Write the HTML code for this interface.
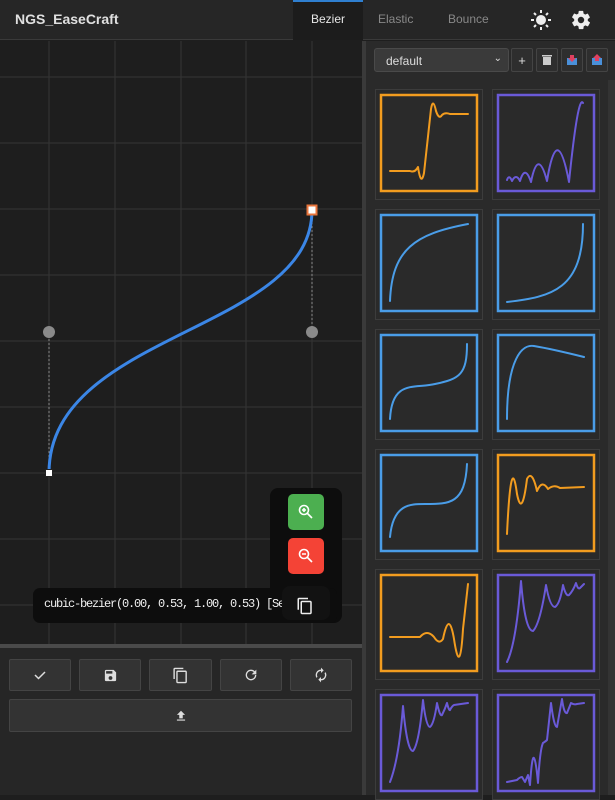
<!DOCTYPE html>
<html><head><meta charset="utf-8"><style>
*{box-sizing:border-box;margin:0;padding:0}
body{width:615px;height:795px;overflow:hidden;background:#1e1e1e;font-family:"Liberation Sans",sans-serif;position:relative}
.abs{position:absolute}
.hdr{left:0;top:0;width:615px;height:40px;background:#262626;border-bottom:1px solid #3a3a3a}
.title{left:15px;top:11px;color:#e0e0e0;font-size:14px;font-weight:bold}
.tab{top:12px;font-size:12px;color:#888}
.btn{background:#333;border:1px solid #444;border-radius:2px;display:flex;align-items:center;justify-content:center}
.card{width:108px;height:111px;background:#2a2a2a;border:1px solid #3c3c3c}
.card svg{display:block}
.card polyline,.card path{stroke-linejoin:round;stroke-linecap:round}
</style></head><body>
<div class="abs hdr"></div>
<div class="abs title">NGS_EaseCraft</div>
<div class="abs" style="left:293px;top:0;width:70px;height:40px;background:#1c1c1c;border-top:2px solid #2f7fd0"></div>
<div class="abs tab" style="left:311px;color:#e8e8e8">Bezier</div>
<div class="abs tab" style="left:378px">Elastic</div>
<div class="abs tab" style="left:448px">Bounce</div>
<svg class="abs" style="left:530px;top:9px" width="22" height="22" viewBox="0 0 22 22"><circle cx="11" cy="11" r="5" fill="#eee"/><g stroke="#eee" stroke-width="2"><path d="M11 1v3M11 18v3M1 11h3M18 11h3M4 4l2 2M16 16l2 2M4 18l2-2M16 6l2-2"/></g></svg>
<svg class="abs" style="left:570px;top:9px" width="22" height="22" viewBox="0 0 24 24"><path fill="#eee" d="M19.4 13c.04-.3.06-.6.06-1s-.02-.7-.06-1l2.1-1.6c.2-.15.25-.4.12-.6l-2-3.5c-.12-.2-.38-.3-.6-.2l-2.5 1c-.5-.4-1.1-.7-1.700-1l-.4-2.6C14.4 2.200 14.2 2 14 2h-4c-.25 0-.45.2-.5.4l-.4 2.6c-.6.25-1.2.6-1.7 1l-2.5-1c-.2-.1-.5 0-.6.2l-2 3.5c-.13.2-.07.45.12.6L4.6 11c-.04.3-.07.6-.07 1s.03.7.07 1l-2.1 1.6c-.2.15-.25.4-.12.6l2 3.5c.12.2.38.3.6.2l2.5-1c.5.4 1.1.7 1.7 1l.4 2.6c.05.25.25.4.5.4h4c.25 0 .45-.2.5-.4l.4-2.6c.6-.25 1.2-.6 1.7-1l2.5 1c.2.1.5 0 .6-.2l2-3.5c.13-.2.07-.45-.12-.6L19.4 13zM12 15.5a3.5 3.5 0 110-7 3.5 3.5 0 010 7z"/></svg>

<svg class="abs" style="left:0;top:41px" width="362" height="603" viewBox="0 41 362 603">
<rect x="0" y="41" width="362" height="603" fill="#1e1e1e"/>
<g stroke="#333" stroke-width="1.2">
<path d="M49 41V644M115 41V644M181 41V644M246 41V644M312 41V644"/>
<path d="M0 77H362M0 143H362M0 209H362M0 275H362M0 341H362M0 407H362M0 473H362M0 539H362M0 605H362"/>
</g>
<g stroke="#888" stroke-width="1" stroke-dasharray="2 2"><path d="M49 473V332M312 210V332"/></g>
<path d="M49 473C49 332 312 332 312 210" fill="none" stroke="#3b86e6" stroke-width="3"/>
<circle cx="49" cy="332" r="6" fill="#8a8a8a"/><circle cx="312" cy="332" r="6" fill="#8a8a8a"/>
<rect x="45.5" y="469.5" width="7" height="7" fill="#fff" stroke="#222"/>
<rect x="307.5" y="205.5" width="9" height="9" fill="#fff" stroke="#e8743b" stroke-width="2"/>
</svg>
<div class="abs" style="left:270px;top:488px;width:72px;height:135px;background:#0d0d0d;border-radius:8px"></div>
<div class="abs" style="left:288px;top:494px;width:36px;height:36px;background:#4caf50;border-radius:5px"></div>
<svg class="abs" style="left:297px;top:503px" width="18" height="18" viewBox="0 0 18 18"><circle cx="7" cy="7" r="4.5" fill="none" stroke="#fff" stroke-width="1.6"/><path d="M10.5 10.5l4.5 4.5M5 7h4M7 5v4" stroke="#fff" stroke-width="1.6"/></svg>
<div class="abs" style="left:288px;top:538px;width:36px;height:36px;background:#f44336;border-radius:5px"></div>
<svg class="abs" style="left:297px;top:547px" width="18" height="18" viewBox="0 0 18 18"><circle cx="7" cy="7" r="4.5" fill="none" stroke="#fff" stroke-width="1.6"/><path d="M10.5 10.5l4.5 4.5M5 7h4" stroke="#fff" stroke-width="1.6"/></svg>
<div class="abs" style="left:33px;top:588px;width:304px;height:35px;background:#0d0d0d;border-radius:7px"></div>
<div class="abs" style="left:44px;top:597px;width:241px;overflow:hidden;color:#f0f0f0;font:12px 'Liberation Mono',monospace;letter-spacing:-1.2px;white-space:nowrap">cubic-bezier(0.00, 0.53, 1.00, 0.53) [Se</div>
<div class="abs" style="left:282px;top:586px;width:48px;height:34px;background:#121212;border-radius:8px"></div>
<svg class="abs" style="left:296px;top:597px" width="18" height="18" viewBox="0 0 24 24"><path fill="#eee" d="M16 1H4c-1.1 0-2 .9-2 2v14h2V3h12V1zm3 4H8c-1.1 0-2 .9-2 2v14c0 1.1.9 2 2 2h11c1.1 0 2-.9 2-2V7c0-1.1-.9-2-2-2zm0 16H8V7h11v14z"/></svg>

<div class="abs" style="left:0;top:644px;width:362px;height:4px;background:#4a4a4a"></div>
<div class="abs" style="left:0;top:648px;width:362px;height:147px;background:#262626"></div>
<div class="abs btn" style="left:9px;top:659px;width:62px;height:32px"><svg width="14" height="14" viewBox="0 0 14 14"><path d="M2 7l3.5 3.5L12 4" fill="none" stroke="#ddd" stroke-width="1.5"/></svg></div>
<div class="abs btn" style="left:79px;top:659px;width:62px;height:32px"><svg width="15" height="15" viewBox="0 0 24 24"><path fill="#ddd" d="M17 3H5a2 2 0 00-2 2v14a2 2 0 002 2h14a2 2 0 002-2V7l-4-4zm-5 16a3 3 0 110-6 3 3 0 010 6zm3-10H5V5h10v4z"/></svg></div>
<div class="abs btn" style="left:149px;top:659px;width:63px;height:32px"><svg width="17" height="17" viewBox="0 0 24 24"><path fill="#ddd" d="M16 1H4c-1.1 0-2 .9-2 2v14h2V3h12V1zm3 4H8c-1.1 0-2 .9-2 2v14c0 1.1.9 2 2 2h11c1.1 0 2-.9 2-2V7c0-1.1-.9-2-2-2zm0 16H8V7h11v14z"/></svg></div>
<div class="abs btn" style="left:220px;top:659px;width:62px;height:32px"><svg width="16" height="16" viewBox="0 0 24 24"><path fill="#ddd" d="M17.65 6.35A7.960 7.960 0 0012 4a8 8 0 108 8h-2a6 6 0 11-1.76-4.24L13 11h7V4l-2.350 2.35z"/></svg></div>
<div class="abs btn" style="left:290px;top:659px;width:62px;height:32px"><svg width="16" height="16" viewBox="0 0 24 24"><path fill="#ddd" d="M12 6v3l4-4-4-4v3a8 8 0 00-6.76 12.26l1.46-1.46A6 6 0 0112 6zm6.76 1.74L17.3 9.2A6 6 0 0112 18v-3l-4 4 4 4v-3a8 8 0 006.76-12.26z"/></svg></div>
<div class="abs btn" style="left:9px;top:699px;width:343px;height:33px"><svg width="14" height="14" viewBox="0 0 24 24"><path fill="#ddd" d="M5 20h14v-2H5v2zm0-10h4v6h6v-6h4l-7-7-7 7z"/></svg></div>

<div class="abs" style="left:362px;top:41px;width:4px;height:754px;background:#3a3a3a"></div>
<div class="abs" style="left:366px;top:41px;width:249px;height:754px;background:#2a2a2a"></div>
<div class="abs" style="left:608px;top:80px;width:7px;height:715px;background:#333"></div>
<div class="abs" style="left:374px;top:48px;width:135px;height:24px;background:#3a3a3a;border:1px solid #4a4a4a;border-radius:3px;color:#ddd;font-size:12px;padding:5px 0 0 11px">default<span style="position:absolute;right:6px;top:4px;font-size:10px">&#8964;</span></div>
<div class="abs btn" style="left:511px;top:48px;width:22px;height:24px;color:#ddd;font-size:13px;background:#2e2e2e">+</div>
<div class="abs btn" style="left:536px;top:48px;width:22px;height:24px;background:#2e2e2e"><svg width="10" height="12" viewBox="0 0 10 12"><path fill="#ccc" d="M1 3h8v8H1zM0 1h10v1.5H0z"/></svg></div>
<div class="abs btn" style="left:561px;top:48px;width:22px;height:24px;background:#2e2e2e"><svg width="12" height="12" viewBox="0 0 12 12"><rect x="1" y="4" width="10" height="7" fill="#4a90d9"/><path d="M4 1h4v3h2L6 8 2 4h2z" fill="#e04060"/></svg></div>
<div class="abs btn" style="left:586px;top:48px;width:22px;height:24px;background:#2e2e2e"><svg width="12" height="12" viewBox="0 0 12 12"><rect x="1" y="4" width="10" height="7" fill="#4a90d9"/><path d="M6 0l4 4H8v3H4V4H2z" fill="#e04060"/></svg></div>

<div class="abs" style="left:375px;top:89px"><div class="card"><svg width="106" height="109" viewBox="1 1 106 109"><rect x="6" y="6" width="96" height="96" fill="none" stroke="#f29c1f" stroke-width="2.5"/><path fill="none" stroke="#f29c1f" stroke-width="2" d="M15,82 L35,82 Q40,84 43,78 Q46,98 49,84 L56,20 Q58,8 61,22 Q64,31 67,26 Q70,23 75,25 L93,25"/></svg></div></div>
<div class="abs" style="left:492px;top:89px"><div class="card"><svg width="106" height="109" viewBox="1 1 106 109"><rect x="6" y="6" width="96" height="96" fill="none" stroke="#6a5ad8" stroke-width="2.5"/><path fill="none" stroke="#6a5ad8" stroke-width="2" d="M15,91 Q17,85 20,92 Q24,84 28,92 Q33,75 39,93 Q46,58 55,92 Q65,30 77,93 Q86,5 91,14"/></svg></div></div>
<div class="abs" style="left:375px;top:209px"><div class="card"><svg width="106" height="109" viewBox="1 1 106 109"><rect x="6" y="6" width="96" height="96" fill="none" stroke="#4a9de8" stroke-width="2.5"/><path fill="none" stroke="#4a9de8" stroke-width="2" d="M15,92 C17,40 40,25 93,15"/></svg></div></div>
<div class="abs" style="left:492px;top:209px"><div class="card"><svg width="106" height="109" viewBox="1 1 106 109"><rect x="6" y="6" width="96" height="96" fill="none" stroke="#4a9de8" stroke-width="2.5"/><path fill="none" stroke="#4a9de8" stroke-width="2" d="M15,93 C60,88 91,80 91,15"/></svg></div></div>
<div class="abs" style="left:375px;top:329px"><div class="card"><svg width="106" height="109" viewBox="1 1 106 109"><rect x="6" y="6" width="96" height="96" fill="none" stroke="#4a9de8" stroke-width="2.5"/><path fill="none" stroke="#4a9de8" stroke-width="2" d="M15,90 C17,50 40,60 60,55 C85,50 92,45 92,15"/></svg></div></div>
<div class="abs" style="left:492px;top:329px"><div class="card"><svg width="106" height="109" viewBox="1 1 106 109"><rect x="6" y="6" width="96" height="96" fill="none" stroke="#4a9de8" stroke-width="2.5"/><path fill="none" stroke="#4a9de8" stroke-width="2" d="M15,90 C15,30 30,15 42,17 C60,20 80,25 92,28"/></svg></div></div>
<div class="abs" style="left:375px;top:449px"><div class="card"><svg width="106" height="109" viewBox="1 1 106 109"><rect x="6" y="6" width="96" height="96" fill="none" stroke="#4a9de8" stroke-width="2.5"/><path fill="none" stroke="#4a9de8" stroke-width="2" d="M15,88 C18,55 35,55 50,55 C75,55 90,55 92,15"/></svg></div></div>
<div class="abs" style="left:492px;top:449px"><div class="card"><svg width="106" height="109" viewBox="1 1 106 109"><rect x="6" y="6" width="96" height="96" fill="none" stroke="#f29c1f" stroke-width="2.5"/><path fill="none" stroke="#f29c1f" stroke-width="2" d="M15,85 Q19,0 25,45 Q30,70 35,30 Q40,20 45,42 Q50,30 56,40 Q62,35 68,39 L92,38"/></svg></div></div>
<div class="abs" style="left:375px;top:569px"><div class="card"><svg width="106" height="109" viewBox="1 1 106 109"><rect x="6" y="6" width="96" height="96" fill="none" stroke="#f29c1f" stroke-width="2.5"/><path fill="none" stroke="#f29c1f" stroke-width="2" d="M15,68 L45,68 Q52,60 59,68 Q64,76 68,70 Q74,40 79,70 Q85,110 88,60 L93,15"/></svg></div></div>
<div class="abs" style="left:492px;top:569px"><div class="card"><svg width="106" height="109" viewBox="1 1 106 109"><rect x="6" y="6" width="96" height="96" fill="none" stroke="#6a5ad8" stroke-width="2.5"/><path fill="none" stroke="#6a5ad8" stroke-width="2" d="M15,93 Q24,75 29,12 Q33,62 41,62 Q48,55 54,16 Q58,38 63,38 Q68,35 71,16 Q74,28 77,26 Q81,22 84,14 Q86,21 88,19 L92,15"/></svg></div></div>
<div class="abs" style="left:375px;top:689px"><div class="card"><svg width="106" height="109" viewBox="1 1 106 109"><rect x="6" y="6" width="96" height="96" fill="none" stroke="#6a5ad8" stroke-width="2.5"/><path fill="none" stroke="#6a5ad8" stroke-width="2" d="M15,93 Q24,70 28,17 Q32,62 38,62 Q44,55 48,11 Q51,38 55,38 Q59,35 62,14 Q65,28 67,26 Q70,20 72,14 Q74,22 75,21 Q77,17 79,16 L93,14"/></svg></div></div>
<div class="abs" style="left:492px;top:689px"><div class="card"><svg width="106" height="109" viewBox="1 1 106 109"><rect x="6" y="6" width="96" height="96" fill="none" stroke="#6a5ad8" stroke-width="2.5"/><path fill="none" stroke="#6a5ad8" stroke-width="2" d="M15,93 L25,91 Q28,88 30,88 L33,93 L36,86 L38,96 Q40,66 42,69 Q44,72 46,94 Q48,60 51,54 Q54,52 55,51 L59,14 Q62,38 65,38 L70,10 Q72,25 75,24 L79,14 Q82,16 85,15 L92,14"/></svg></div></div>
</body></html>
